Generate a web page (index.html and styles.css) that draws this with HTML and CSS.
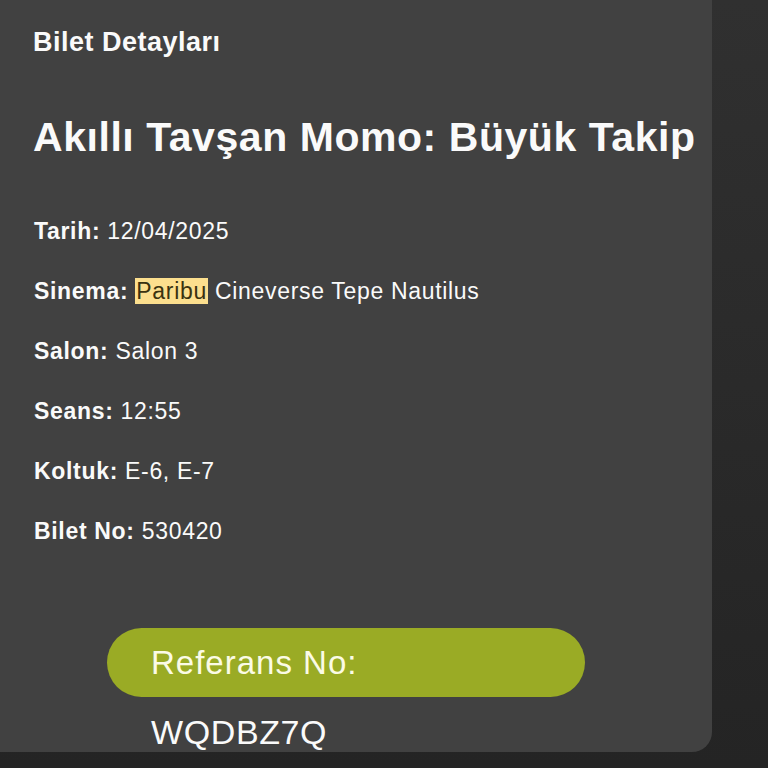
FILE: index.html
```html
<!DOCTYPE html>
<html lang="tr">
<head>
<meta charset="utf-8">
<title>Bilet Detayları</title>
<link rel="stylesheet" href="styles.css">
</head>
<body>
<div class="page">
  <div class="card">
    <h2 class="section-title">Bilet Detayları</h2>
    <h1 class="movie-title">Akıllı Tavşan Momo: Büyük Takip</h1>
    <div class="details">
      <p class="row"><b>Tarih:</b> 12/04/2025</p>
      <p class="row"><b>Sinema:</b> <mark class="hl">Paribu</mark> Cineverse Tepe Nautilus</p>
      <p class="row"><b>Salon:</b> Salon 3</p>
      <p class="row"><b>Seans:</b> 12:55</p>
      <p class="row"><b>Koltuk:</b> E-6, E-7</p>
      <p class="row"><b>Bilet No:</b> 530420</p>
    </div>
    <div class="ref">
      <div class="ref-pill">Referans No:</div>
      <div class="ref-code">WQDBZ7Q</div>
    </div>
  </div>
</div>
</body>
</html>
```
FILE: styles.css
```css
html, body {
  margin: 0;
  padding: 0;
}
body {
  width: 768px;
  height: 768px;
  overflow: hidden;
  background: linear-gradient(to bottom, #303030 0%, #242424 100%);
  font-family: "Liberation Sans", Arial, sans-serif;
  color: #fafafa;
}
.page {
  display: flex;
}
.card {
  width: 712px;
  height: 752px;
  box-sizing: border-box;
  background: #414141;
  border-bottom-right-radius: 20px;
  padding: 26px 0 0 33px;
  display: flex;
  flex-direction: column;
}
.section-title {
  margin: 0;
  font-size: 27px;
  line-height: 32px;
  font-weight: bold;
  letter-spacing: 0.5px;
}
.movie-title {
  margin: 56px 0 0 0;
  font-size: 41px;
  line-height: 46px;
  font-weight: bold;
  letter-spacing: 0.55px;
}
.details {
  margin-top: 58px;
  display: flex;
  flex-direction: column;
  gap: 33px;
}
.row {
  margin: 0 0 0 1px;
  font-size: 23px;
  line-height: 27px;
  letter-spacing: 0.68px;
}
.row b {
  font-weight: bold;
}
.hl {
  background: #fcdf8e;
  color: #3a3210;
  padding: 0 1px;
}
.ref {
  margin: 83px 0 0 74px;
  display: flex;
  flex-direction: column;
}
.ref-pill {
  width: 478px;
  height: 69px;
  box-sizing: border-box;
  border-radius: 35px;
  background: #9aab25;
  color: #fbfbe6;
  font-size: 33px;
  line-height: 69px;
  padding-left: 44px;
  letter-spacing: 1px;
}
.ref-code {
  margin-top: 16px;
  padding-left: 44px;
  font-size: 34px;
  line-height: 38px;
  color: #fafafa;
  letter-spacing: 0.6px;
}
```
